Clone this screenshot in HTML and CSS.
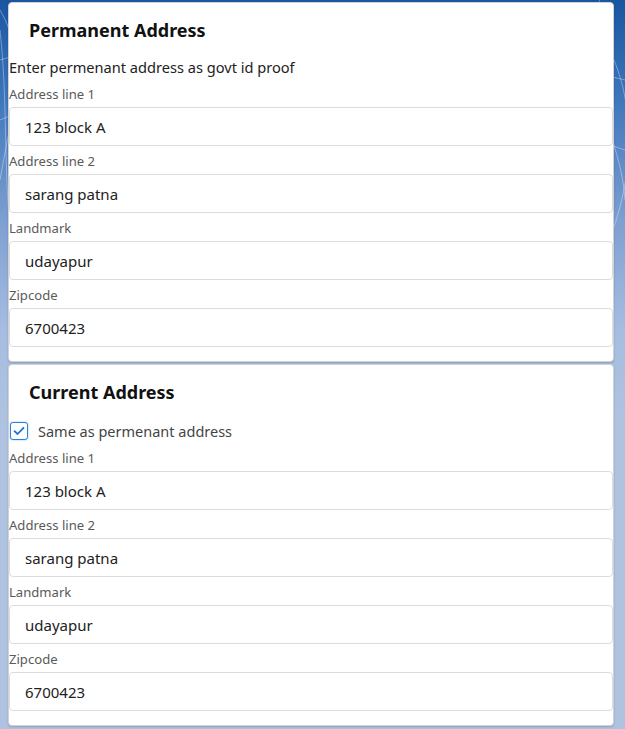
FILE: index.html
```html
<!DOCTYPE html>
<html lang="en">
<head>
<meta charset="utf-8">
<title>Address</title>
<link rel="stylesheet" href="styles.css">
</head>
<body>
<div class="page">
  <section class="card">
    <h2 class="card-title">Permanent Address</h2>
    <p class="card-desc">Enter permenant address as govt id proof</p>
    <div class="fields">
      <div class="field">
        <label class="field-label">Address line 1</label>
        <div class="field-input">123 block A</div>
      </div>
      <div class="field">
        <label class="field-label">Address line 2</label>
        <div class="field-input">sarang patna</div>
      </div>
      <div class="field">
        <label class="field-label">Landmark</label>
        <div class="field-input">udayapur</div>
      </div>
      <div class="field">
        <label class="field-label">Zipcode</label>
        <div class="field-input">6700423</div>
      </div>
    </div>
  </section>
  <section class="card">
    <h2 class="card-title card-title-check">Current Address</h2>
    <div class="check-row">
      <span class="checkbox">
        <svg width="12" height="10" viewBox="0 0 12 10"><path d="M1.5 5.2 L4.6 8 L10.5 1.8" fill="none" stroke="#1e73d2" stroke-width="1.8" stroke-linecap="round" stroke-linejoin="round"/></svg>
      </span>
      <span class="check-label">Same as permenant address</span>
    </div>
    <div class="fields">
      <div class="field">
        <label class="field-label">Address line 1</label>
        <div class="field-input">123 block A</div>
      </div>
      <div class="field">
        <label class="field-label">Address line 2</label>
        <div class="field-input">sarang patna</div>
      </div>
      <div class="field">
        <label class="field-label">Landmark</label>
        <div class="field-input">udayapur</div>
      </div>
      <div class="field">
        <label class="field-label">Zipcode</label>
        <div class="field-input">6700423</div>
      </div>
    </div>
  </section>
</div>
</body>
</html>
```
FILE: styles.css
```css
html, body {
  margin: 0;
  padding: 0;
}
body {
  min-height: 729px;
  font-family: "Noto Sans", "Open Sans", sans-serif;
  color: #222;
  background-color: #afc3e0;
  background-image:
    url("data:image/svg+xml;utf8,<svg xmlns='http://www.w3.org/2000/svg' width='625' height='360'><g fill='none' stroke='white' stroke-opacity='0.35' stroke-width='1'><path d='M0 60 C 200 0, 420 30, 625 80'/><path d='M0 120 C 180 40, 420 80, 625 150'/><path d='M590 20 C 640 80, 640 180, 600 260'/><path d='M600 0 C 560 60, 620 120, 625 200'/><path d='M0 30 C 10 120, 0 200, 20 300'/><path d='M0 10 C 30 60, 10 120, 0 180'/></g></svg>"),
    linear-gradient(180deg, #1a55a0 0px, #3a73ba 90px, #7e9fd1 220px, #a6bde0 330px, #afc3e0 420px);
  background-repeat: no-repeat;
}
.page {
  display: flex;
  flex-direction: column;
  gap: 2px;
  padding: 2px 11px 3px 8px;
}
.card {
  background: #fff;
  border: 1px solid #cfd3d8;
  border-radius: 4px;
  box-shadow: 0 1px 2px rgba(0,0,0,0.18);
  padding: 15px 0 14px;
}
.card-title {
  margin: 0 0 15px 20px;
  font-size: 18px;
  line-height: 24px;
  font-weight: 700;
  color: #111;
}
.card-title-check {
  margin-bottom: 17px;
}
.card-desc {
  margin: 0 0 9px;
  font-size: 14.6px;
  line-height: 20px;
  color: #222;
}
.fields {
  display: flex;
  flex-direction: column;
  gap: 7px;
}
.field {
  display: flex;
  flex-direction: column;
  gap: 4px;
}
.field-label {
  font-size: 13.1px;
  line-height: 17px;
  color: #5a5a5a;
}
.field-input {
  height: 37px;
  border: 1px solid #dcdcdc;
  border-radius: 4px;
  padding: 0 15px;
  display: flex;
  align-items: center;
  font-size: 15px;
  color: #222;
}
.check-row {
  display: flex;
  align-items: center;
  gap: 10px;
  margin: 0 0 9px 1px;
  height: 20px;
}
.checkbox {
  width: 16px;
  height: 16px;
  border: 1px solid #2a7fd8;
  border-radius: 3px;
  display: flex;
  align-items: center;
  justify-content: center;
  background: #fff;
  box-shadow: 0 0 2px rgba(42,127,216,0.5);
}
.check-label {
  font-size: 14.5px;
  color: #444;
}
```
